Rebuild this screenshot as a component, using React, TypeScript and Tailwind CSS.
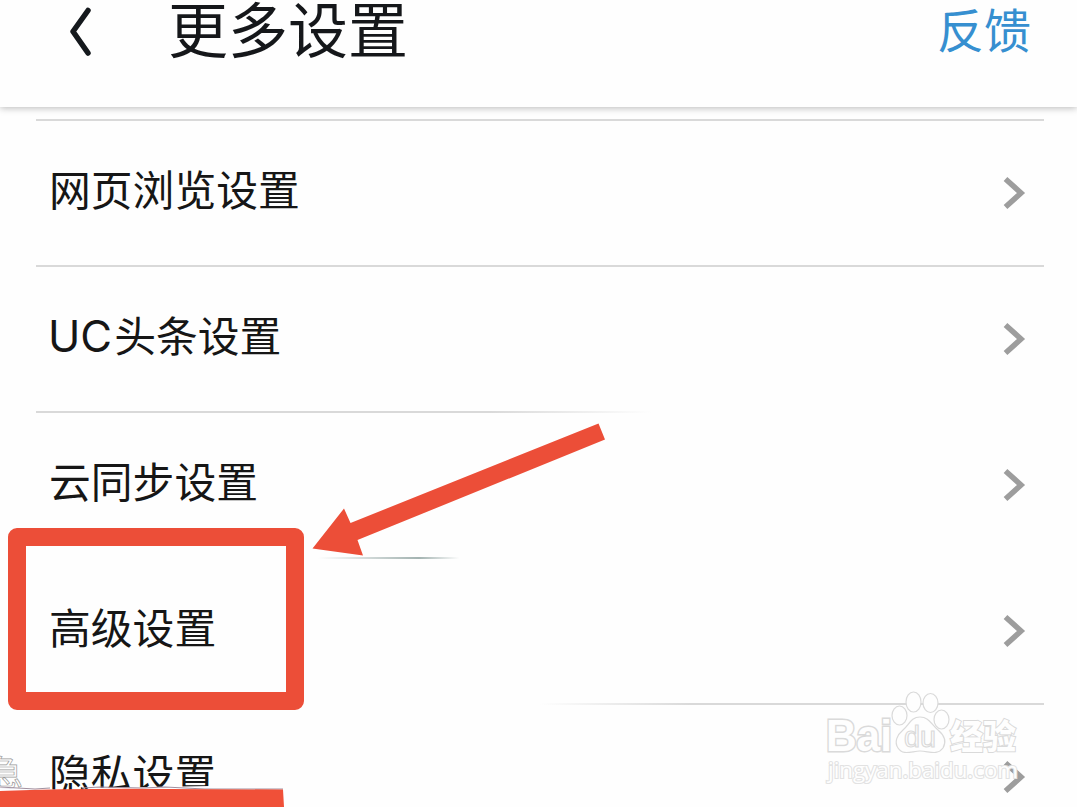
import React from 'react';

type Item = {
  latin?: string;
  label: string;
  line: string;
};

const items: Item[] = [
  { label: '网页浏览设置', line: 'bg-[#d9d9d9]' },
  { latin: 'UC', label: '头条设置', line: 'bg-linear-to-r from-[#d9d9d9] from-45% to-transparent to-61%' },
  { label: '云同步设置', line: 'bg-linear-to-r from-transparent from-28% via-[#a3b3b1] via-38% to-transparent to-42%' },
  { label: '高级设置', line: 'bg-linear-to-r from-transparent from-50% to-[#d9d9d9] to-65%' },
  { label: '隐私设置', line: 'bg-transparent' },
];

const Header = () => {
  return (
    <header className="relative z-10 h-[107px] shrink-0 bg-[#fefefe] shadow-[0_1px_7px_rgba(0,0,0,0.28)]">
      <div className="flex h-[62px] items-center pl-[67px] pr-[46px]">
        <svg className="h-[50px] w-[26px]" viewBox="0 0 26 50" fill="none">
          <path d="M21 4.500L6 25.500L21 47" stroke="#15191d" strokeWidth="5.500" strokeLinecap="round" strokeLinejoin="round" />
        </svg>
        <h1 className="-mt-[9px] ml-[75px] text-[60px] leading-[62px] text-[#15171a]">更多设置</h1>
        <a href="#" className="-mt-[7px] ml-auto text-[47px] leading-[62px] text-[#368fd0]">反馈</a>
      </div>
    </header>
  );
};

const Row = ({ item }: { item: Item }) => {
  return (
    <li className="h-[146px] shrink-0">
      <div className="flex h-[144px] items-center justify-between pl-[13px] pr-[18px]">
        <span className="pb-[11px] text-[41.800px] leading-[60px] text-[#161616]">
          {item.latin && <span className="-ml-px mr-[2px] font-['Inter','Liberation_Sans',sans-serif] text-[43.500px] leading-[50px]">{item.latin}</span>}
          {item.label}
        </span>
        <svg className="h-[36px] w-[24px]" viewBox="0 0 24 36" fill="none">
          <path d="M3.500 4L19 18L3.500 32" stroke="#9d9d9d" strokeWidth="5.500" />
        </svg>
      </div>
      <div className={`h-[2px] ${item.line}`} />
    </li>
  );
};

// red frame and arrow that point at the advanced settings row
const Marks = () => {
  return (
    <>
      <div className="absolute left-[8px] top-[528px] h-[182px] w-[296px] rounded-[9px] border-[18px] border-[#ec4e38]" />
      <svg className="absolute left-[308px] top-[418px] h-[142px] w-[302px]" viewBox="308 418 302 142">
        <polygon points="312.5,548.5 344,508.500 350.5,523 598.5,423.500 605,439.500 357.5,540 363,555.500" fill="#ec4e38" />
      </svg>
      <svg className="absolute left-0 top-[750px] h-[57px] w-[300px]" viewBox="0 750 300 57">
        <text x="-12" y="786" fontSize="35" fill="#fefefe" stroke="#999" strokeWidth="0.7">急</text>
        <path d="M0 788L45 789L80 791L90 788L210 786L213 790L0 792Z" fill="#fdfcff" />
        <path d="M0 787L35 789L50 788M82 788L100 787L142 788L165 787L205 789L283 789" fill="none" stroke="#a1909f" strokeWidth="1.200" />
        <path d="M0 791Q80 788 170 789L283 789.500L284 807H0Z" fill="#f05038" />
      </svg>
    </>
  );
};

const Watermark = () => {
  return (
    <svg className="absolute left-[820px] top-[685px] h-[104px] w-[204px]" viewBox="820 685 204 104">
      <g fill="#fefefe" stroke="#dadada" strokeWidth="1.200">
        <ellipse cx="899.5" cy="715.5" rx="7.500" ry="9.500" />
        <ellipse cx="913.5" cy="702" rx="7.500" ry="10" />
        <ellipse cx="930.5" cy="703" rx="7.500" ry="9.500" />
        <ellipse cx="941.5" cy="719.5" rx="7.500" ry="9.500" />
        <path d="M920 717C911 717 909 725 903 730C897 735 894 742 898 748C903 756 912 751 920 751C929 751 937 756 943 748C947 741 944 735 938 730C931 724 929 717 920 717Z" />
        <g className="font-['Liberation_Sans',sans-serif]" fontWeight="700">
          <text x="826" y="751" fontSize="44" strokeWidth="3" paintOrder="stroke" textLength="66" lengthAdjust="spacingAndGlyphs">Bai</text>
          <text x="904" y="747" fontSize="29" fontWeight="400" textLength="32" lengthAdjust="spacingAndGlyphs">du</text>
        </g>
        <text x="950" y="749" fontSize="34" fontWeight="900" strokeWidth="2" paintOrder="stroke" textLength="66" lengthAdjust="spacingAndGlyphs">经验</text>
        <text
          className="font-['Open_Sans',sans-serif]"
          x="828"
          y="778"
          fontSize="22"
          stroke="#e2e2e2"
          strokeWidth="2.200"
          paintOrder="stroke"
          textLength="190"
          lengthAdjust="spacingAndGlyphs"
        >
          jingyan.baidu.com
        </text>
      </g>
    </svg>
  );
};

const App = () => {
  return (
    <div className="relative flex h-[807px] w-[1077px] flex-col overflow-hidden bg-[#fefefe] font-['Noto_Sans_CJK_SC',sans-serif]">
      <Header />
      <ul className="mx-[36px] mt-[12px] flex w-[1008px] flex-col">
        <li className="h-[2px] shrink-0 bg-[#d9d9d9]" />
        {items.map((item) => (
          <Row key={item.label} item={item} />
        ))}
      </ul>
      <Marks />
      <Watermark />
    </div>
  );
};

export default App;
